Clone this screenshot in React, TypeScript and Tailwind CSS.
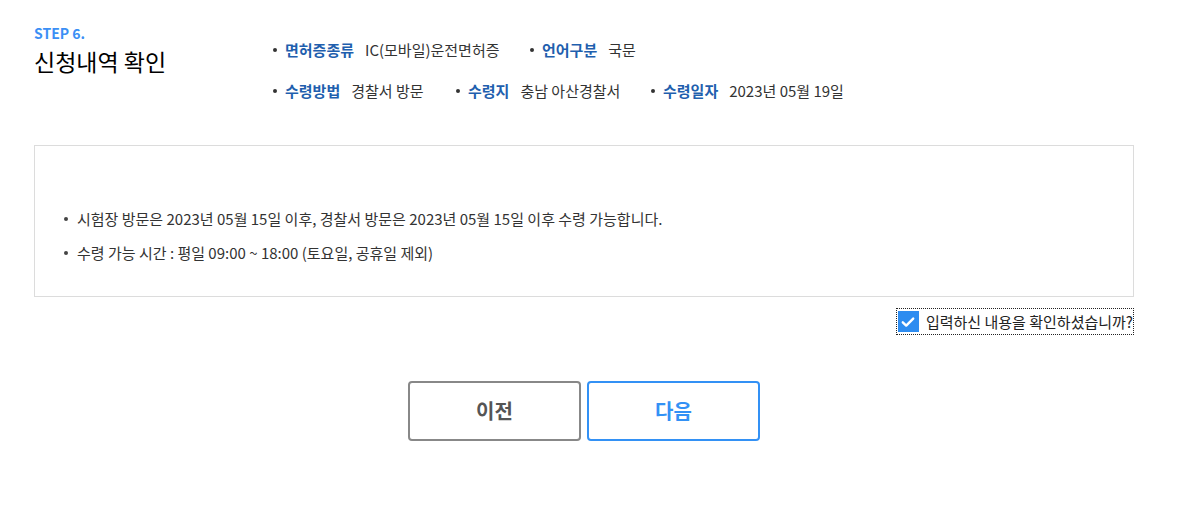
import * as React from 'react';

const font = { fontFamily: '"Noto Sans CJK KR", "Noto Sans", sans-serif' };

function Item({ label, value, className = '' }: { label: string; value: string; className?: string }) {
  return (
    <li className={`flex items-center ${className}`}>
      <span className="mr-[8px] h-[4px] w-[4px] rounded-full bg-[#333]" />
      <span className="font-bold text-[#1f5fae]">{label}</span>
      <span className="ml-[11px] text-[#333]">{value}</span>
    </li>
  );
}

export default function App() {
  return (
    <div className="min-h-[511px] bg-white" style={font}>
      <div className="ml-[34px] w-[1100px] pt-[22px]">
        <div className="flex">
          <div className="w-[239px]">
            <p className="text-[14px] font-bold leading-[22px] text-[#3b8ff5]">STEP 6.</p>
            <h2 className="mt-[2px] text-[23px] leading-[30px] text-black">신청내역 확인</h2>
          </div>
          <div className="pt-[17px] text-[15px] leading-[22px]">
            <ul className="flex">
              <Item label="면허증종류" value="IC(모바일)운전면허증" className="w-[257px]" />
              <Item label="언어구분" value="국문" />
            </ul>
            <ul className="mt-[19px] flex">
              <Item label="수령방법" value="경찰서 방문" className="w-[183px]" />
              <Item label="수령지" value="충남 아산경찰서" className="w-[195px]" />
              <Item label="수령일자" value="2023년 05월 19일" />
            </ul>
          </div>
        </div>

        <div className="mt-[43px] h-[152px] border border-[#dcdcdc] px-[29px] pt-[62px] text-[15px] leading-[22px] text-[#333]">
          <ul className="flex flex-col gap-[12px]">
            <li className="flex items-center">
              <span className="mr-[9px] h-[4px] w-[4px] rounded-full bg-[#444]" />
              시험장 방문은 2023년 05월 15일 이후, 경찰서 방문은 2023년 05월 15일 이후 수령 가능합니다.
            </li>
            <li className="flex items-center">
              <span className="mr-[9px] h-[4px] w-[4px] rounded-full bg-[#444]" />
              수령 가능 시간 : 평일 09:00 ~ 18:00 (토요일, 공휴일 제외)
            </li>
          </ul>
        </div>

        <div className="mt-[11px] flex justify-end">
          <label className="flex items-center gap-[7px] border border-dotted border-[#222] py-[2px] pl-[1px] pr-0 text-[15px] leading-[20px] text-[#222]">
            <span className="flex h-[21px] w-[21px] items-center justify-center bg-[#2d8cf0]">
              <svg width="16" height="16" viewBox="0 0 16 16" fill="none">
                <path d="M2.8 8.3l3.4 3.3L13.2 4.6" stroke="white" strokeWidth="2.4" strokeLinecap="round" strokeLinejoin="round" />
              </svg>
            </span>
            입력하신 내용을 확인하셨습니까?
          </label>
        </div>

        <div className="mt-[46px] flex justify-center gap-[6px]">
          <button className="h-[60px] w-[173px] rounded-[4px] border-2 border-[#888] bg-white text-[20px] font-bold text-[#555]">
            이전
          </button>
          <button className="h-[60px] w-[173px] rounded-[4px] border-2 border-[#3391f5] bg-white text-[20px] font-bold text-[#3391f5]">
            다음
          </button>
        </div>
      </div>
    </div>
  );
}
